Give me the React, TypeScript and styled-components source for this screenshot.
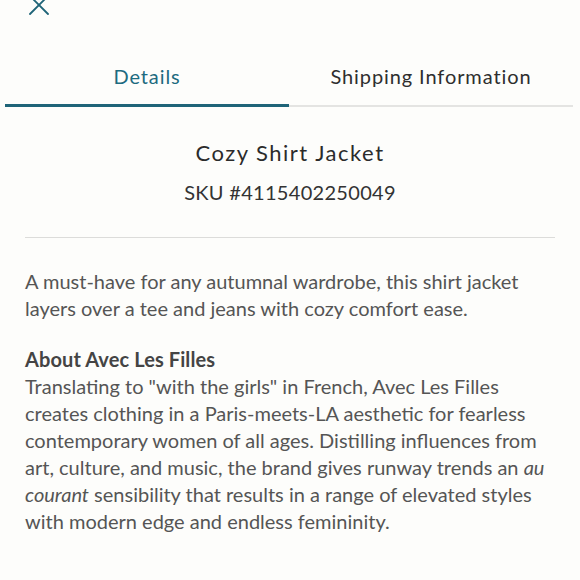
import React, { useState } from 'react';
import styled, { createGlobalStyle } from 'styled-components';

const GlobalStyle = createGlobalStyle`
  html, body {
    margin: 0;
    padding: 0;
    background: #fdfdfb;
  }
  body {
    font-family: Lato, "Noto Sans", sans-serif;
    -webkit-font-smoothing: antialiased;
  }
`;

const Page = styled.div`
  width: 580px;
  height: 580px;
  overflow: hidden;
  background: #fdfdfb;
  display: flex;
  flex-direction: column;
`;

const TopBar = styled.div`
  height: 50px;
  position: relative;
`;

const CloseButton = styled.button`
  position: absolute;
  left: 28px;
  top: -6px;
  width: 22px;
  height: 22px;
  padding: 0;
  border: none;
  background: none;
  cursor: pointer;
  display: flex;
  align-items: center;
  justify-content: center;
`;

const Tabs = styled.div`
  display: flex;
  margin: 0 7px 0 5px;
  border-bottom: 2px solid #e4e4e2;
`;

const Tab = styled.button<{ $active: boolean }>`
  flex: 1;
  height: 57px;
  margin-bottom: -2px;
  padding: 0 0 2px;
  border: none;
  background: none;
  font-family: Lato, "Noto Sans", sans-serif;
  font-size: 20px;
  letter-spacing: 0.9px;
  color: ${({ $active }) => ($active ? '#1d6b80' : '#2e2e2e')};
  border-bottom: 3px solid ${({ $active }) => ($active ? '#1f6478' : 'transparent')};
  cursor: pointer;
`;

const Body = styled.div`
  padding: 0 25px;
`;

const Header = styled.div`
  text-align: center;
  padding: 32px 0 33px;
  border-bottom: 1px solid #dcdcda;
`;

const Title = styled.h1`
  margin: 0;
  font-size: 22px;
  font-weight: 400;
  letter-spacing: 1.5px;
  color: #2b2b2b;
  line-height: 28px;
`;

const Sku = styled.div`
  margin-top: 13px;
  font-size: 20px;
  letter-spacing: 0.3px;
  color: #333;
  line-height: 24px;
`;

const Text = styled.p`
  margin: 0;
  font-size: 20px;
  line-height: 27px;
  color: #555;
`;

const Intro = styled(Text)`
  margin-top: 30px;
`;

const Section = styled.div`
  margin-top: 24px;
`;

const SectionTitle = styled.h2`
  margin: 0;
  font-size: 20px;
  line-height: 27px;
  font-weight: 700;
  letter-spacing: 0.1px;
  color: #444;
`;

const CloseIcon = () => (
  <svg width="20" height="20" viewBox="0 0 20 20" fill="none">
    <path d="M1 1L19 19M19 1L1 19" stroke="#1f6478" strokeWidth="1.8" strokeLinecap="round" />
  </svg>
);

export default function App() {
  const [tab, setTab] = useState<'details' | 'shipping'>('details');

  return (
    <Page>
      <GlobalStyle />
      <TopBar>
        <CloseButton aria-label="Close">
          <CloseIcon />
        </CloseButton>
      </TopBar>
      <Tabs>
        <Tab $active={tab === 'details'} onClick={() => setTab('details')}>Details</Tab>
        <Tab $active={tab === 'shipping'} onClick={() => setTab('shipping')}>Shipping Information</Tab>
      </Tabs>
      <Body>
        <Header>
          <Title>Cozy Shirt Jacket</Title>
          <Sku>SKU #4115402250049</Sku>
        </Header>
        <Intro>
          A must-have for any autumnal wardrobe, this shirt jacket layers over a tee and jeans with cozy comfort ease.
        </Intro>
        <Section>
          <SectionTitle>About Avec Les Filles</SectionTitle>
          <Text>
            Translating to "with the girls" in French, Avec Les Filles creates clothing in a Paris-meets-LA aesthetic
            for fearless contemporary women of all ages. Distilling influences from art, culture, and music, the brand
            gives runway trends an <em>au courant</em> sensibility that results in a range of elevated styles with
            modern edge and endless femininity.
          </Text>
        </Section>
      </Body>
    </Page>
  );
}
